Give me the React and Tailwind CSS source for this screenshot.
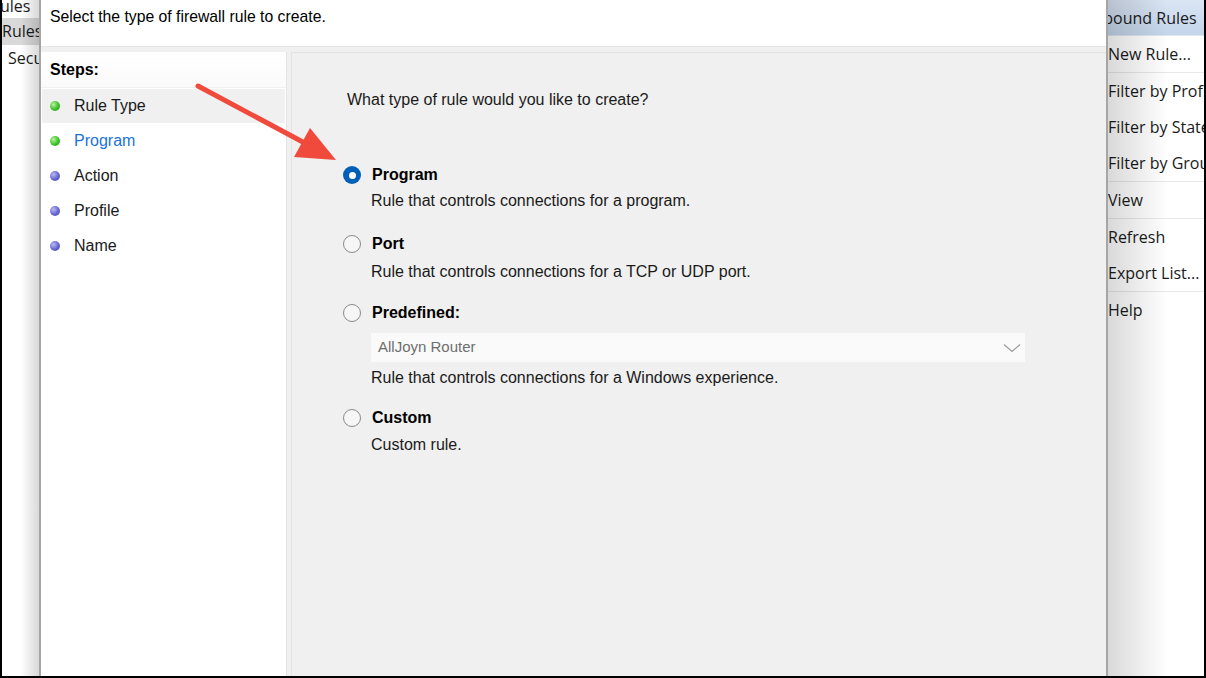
// App.jsx – New Inbound Rule Wizard (Rule Type step)

const STEPS = [
  { label: 'Rule Type', done: true, active: false, current: true },
  { label: 'Program', done: true, active: true },
  { label: 'Action' },
  { label: 'Profile' },
  { label: 'Name' },
];

const ACTIONS = [
  { label: 'New Rule...', border: true },
  { label: 'Filter by Profile' },
  { label: 'Filter by State' },
  { label: 'Filter by Group', border: true },
  { label: 'View', border: true },
  { label: 'Refresh' },
  { label: 'Export List...', border: true },
  { label: 'Help' },
];

function Bullet({ done }) {
  return (
    <span
      className={
        done
          ? 'h-[10px] w-[10px] rounded-full bg-[radial-gradient(circle_at_35%_35%,#b6f59a,#3cbf2a_55%,#2a9a1c)]'
          : 'h-[10px] w-[10px] rounded-full bg-[radial-gradient(circle_at_35%_35%,#b9b9f2,#6464d0_55%,#4a4ab0)]'
      }
    />
  );
}

function Radio({ checked }) {
  if (checked) {
    return (
      <span className="flex h-[18px] w-[18px] items-center justify-center rounded-full bg-[#005fb8]">
        <span className="h-[7px] w-[7px] rounded-full bg-white" />
      </span>
    );
  }
  return <span className="h-[18px] w-[18px] rounded-full border border-[#8a8a8a] bg-[#f6f6f6]" />;
}

function Option({ label, checked, top, children }) {
  return (
    <div style={{ marginTop: top }}>
      <div className="flex h-[20px] items-center gap-[11px]">
        <Radio checked={checked} />
        <span className="text-[16px] font-bold text-black">{label}</span>
      </div>
      <div className="pl-[28px]">{children}</div>
    </div>
  );
}

export default function App() {
  return (
    <div
      className="relative flex h-[678px] w-[1206px] overflow-hidden border-x-2 border-b-2 border-black bg-white text-[#1a1a1a]"
      style={{ fontFamily: '"Liberation Sans", Arial, sans-serif' }}
    >
      {/* Left strip of the console behind the dialog */}
      <div className="relative w-[37px] shrink-0 overflow-hidden bg-white" style={{ fontFamily: '"Open Sans", sans-serif' }}>
        <div className="-mt-[6px] h-[24px] whitespace-nowrap pl-[2px] text-[16px] leading-[24px]">
          <span className="-ml-[14px] inline-block">Rules</span>
        </div>
        <div className="h-[27px] whitespace-nowrap bg-[#d9d9d9] text-[16px] leading-[27px]">Rules</div>
        <div className="h-[27px] whitespace-nowrap pl-[6px] text-[16px] leading-[27px]">Security</div>
        <div className="pointer-events-none absolute inset-0 bg-gradient-to-r from-transparent via-transparent to-black/15" />
      </div>

      {/* Dialog */}
      <div className="flex w-[1069px] shrink-0 flex-col border-x-2 border-[#a6a6a6] bg-white">
        <div className="h-[47px] border-b border-[#e6e6e6] pl-[9px] pt-[8px] text-[15.75px] leading-[18px] text-black">
          Select the type of firewall rule to create.
        </div>

        <div className="flex flex-1 bg-[#f0f0f0] pt-[5px]">
          {/* Steps */}
          <div className="w-[246px] shrink-0 border-r border-[#e4e4e4] bg-white">
            <div className="flex h-[36px] items-center border-b border-[#f0f0f0] bg-gradient-to-b from-white to-[#fafafa] pl-[9px] text-[16px] font-bold text-black">
              Steps:
            </div>
            {STEPS.map((s) => (
              <div
                key={s.label}
                className={
                  s.current
                    ? 'mx-[1px] mt-[1px] flex h-[34px] items-center gap-[14px] bg-[#f0f0f0] pl-[8px] text-[16px]'
                    : 'mx-[1px] flex h-[35px] items-center gap-[14px] pl-[8px] text-[16px]'
                }
              >
                <Bullet done={s.done} />
                <span className={s.active ? 'text-[#1a73d9]' : 'text-[#1a1a1a]'}>{s.label}</span>
              </div>
            ))}
          </div>

          {/* Right pane */}
          <div className="ml-[4px] flex-1 border-l border-t border-[#e2e2e2] bg-[#f0f0f0] pl-[51px] pt-[38px]">
            <div className="ml-[4px] text-[16px] leading-[18px] text-[#1a1a1a]">
              What type of rule would you like to create?
            </div>

            <Option label="Program" checked top={56}>
              <div className="mt-[7px] text-[16px] leading-[18px]">Rule that controls connections for a program.</div>
            </Option>

            <Option label="Port" top={24}>
              <div className="mt-[9px] text-[16px] leading-[18px]">Rule that controls connections for a TCP or UDP port.</div>
            </Option>

            <Option label="Predefined:" top={22}>
              <div className="mt-[10px] flex h-[29px] w-[654px] items-center justify-between bg-[#fafafa] pl-[7px] pr-[4px] text-[15px] text-[#6e6e6e]">
                <span>AllJoyn Router</span>
                <svg width="18" height="10" viewBox="0 0 18 10" fill="none">
                  <path d="M1 1.5 L9 8.5 L17 1.5" stroke="#9a9a9a" strokeWidth="1.2" />
                </svg>
              </div>
              <div className="mt-[7px] text-[16px] leading-[18px]">Rule that controls connections for a Windows experience.</div>
            </Option>

            <Option label="Custom" top={21}>
              <div className="mt-[8px] text-[16px] leading-[18px]">Custom rule.</div>
            </Option>
          </div>
        </div>
      </div>

      {/* Actions pane behind the dialog */}
      <div className="relative flex-1 overflow-hidden bg-white" style={{ fontFamily: '"Open Sans", sans-serif' }}>
        <div className="flex h-[36px] items-center whitespace-nowrap border-b border-[#dfe6ee] bg-gradient-to-b from-[#dbe6f4] to-[#c3d5ea] text-[16px] text-[#1a1a1a]">
          <span className="-ml-[19px]">Inbound Rules</span>
        </div>
        {ACTIONS.map((a) => (
          <div
            key={a.label}
            className={
              a.border
                ? 'flex h-[37px] items-center whitespace-nowrap border-b border-[#e8e8e8] text-[16px] text-[#1a1a1a]'
                : 'flex h-[36px] items-center whitespace-nowrap text-[16px] text-[#1a1a1a]'
            }
          >
            {a.label}
          </div>
        ))}
        <div className="pointer-events-none absolute inset-y-0 left-0 w-[60px] bg-gradient-to-r from-black/15 to-transparent" />
      </div>

      {/* Red annotation arrow */}
      <svg className="pointer-events-none absolute inset-0" width="1206" height="678" viewBox="0 0 1206 678">
        <line x1="196" y1="86" x2="312" y2="148" stroke="#f04a3c" strokeWidth="5" strokeLinecap="round" />
        <polygon points="334,160 292,157 308,128" fill="#f04a3c" />
      </svg>
    </div>
  );
}
